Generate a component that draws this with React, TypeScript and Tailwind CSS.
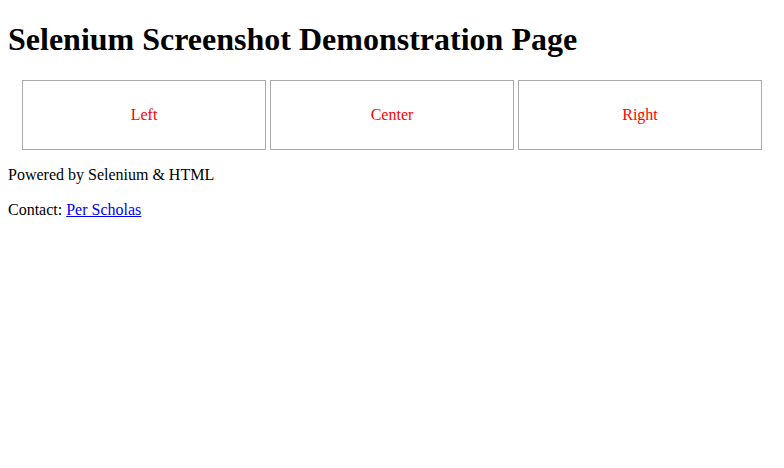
export default function App() {
  return (
    <div className="mx-2 text-black text-[16px]" style={{ fontFamily: '"Liberation Serif", "Times New Roman", serif' }}>
      <h1 className="text-[32px] font-bold leading-[37px] pt-[21px] pb-[22px]">Selenium Screenshot Demonstration Page</h1>
      <div className="flex gap-1 px-[14px]">
        <div className="w-[244px] h-[70px] border border-[#aaaaaa] flex items-center justify-center text-[#ff0000]">Left</div>
        <div className="w-[244px] h-[70px] border border-[#aaaaaa] flex items-center justify-center text-[#ff0000]">Center</div>
        <div className="w-[244px] h-[70px] border border-[#aaaaaa] flex items-center justify-center text-[#ff0000]">Right</div>
      </div>
      <p className="mt-4 leading-[18px]">Powered by Selenium &amp; HTML</p>
      <p className="mt-[17px] leading-[18px]">
        Contact: <a href="#" className="text-[#0000ee] underline">Per Scholas</a>
      </p>
    </div>
  );
}
